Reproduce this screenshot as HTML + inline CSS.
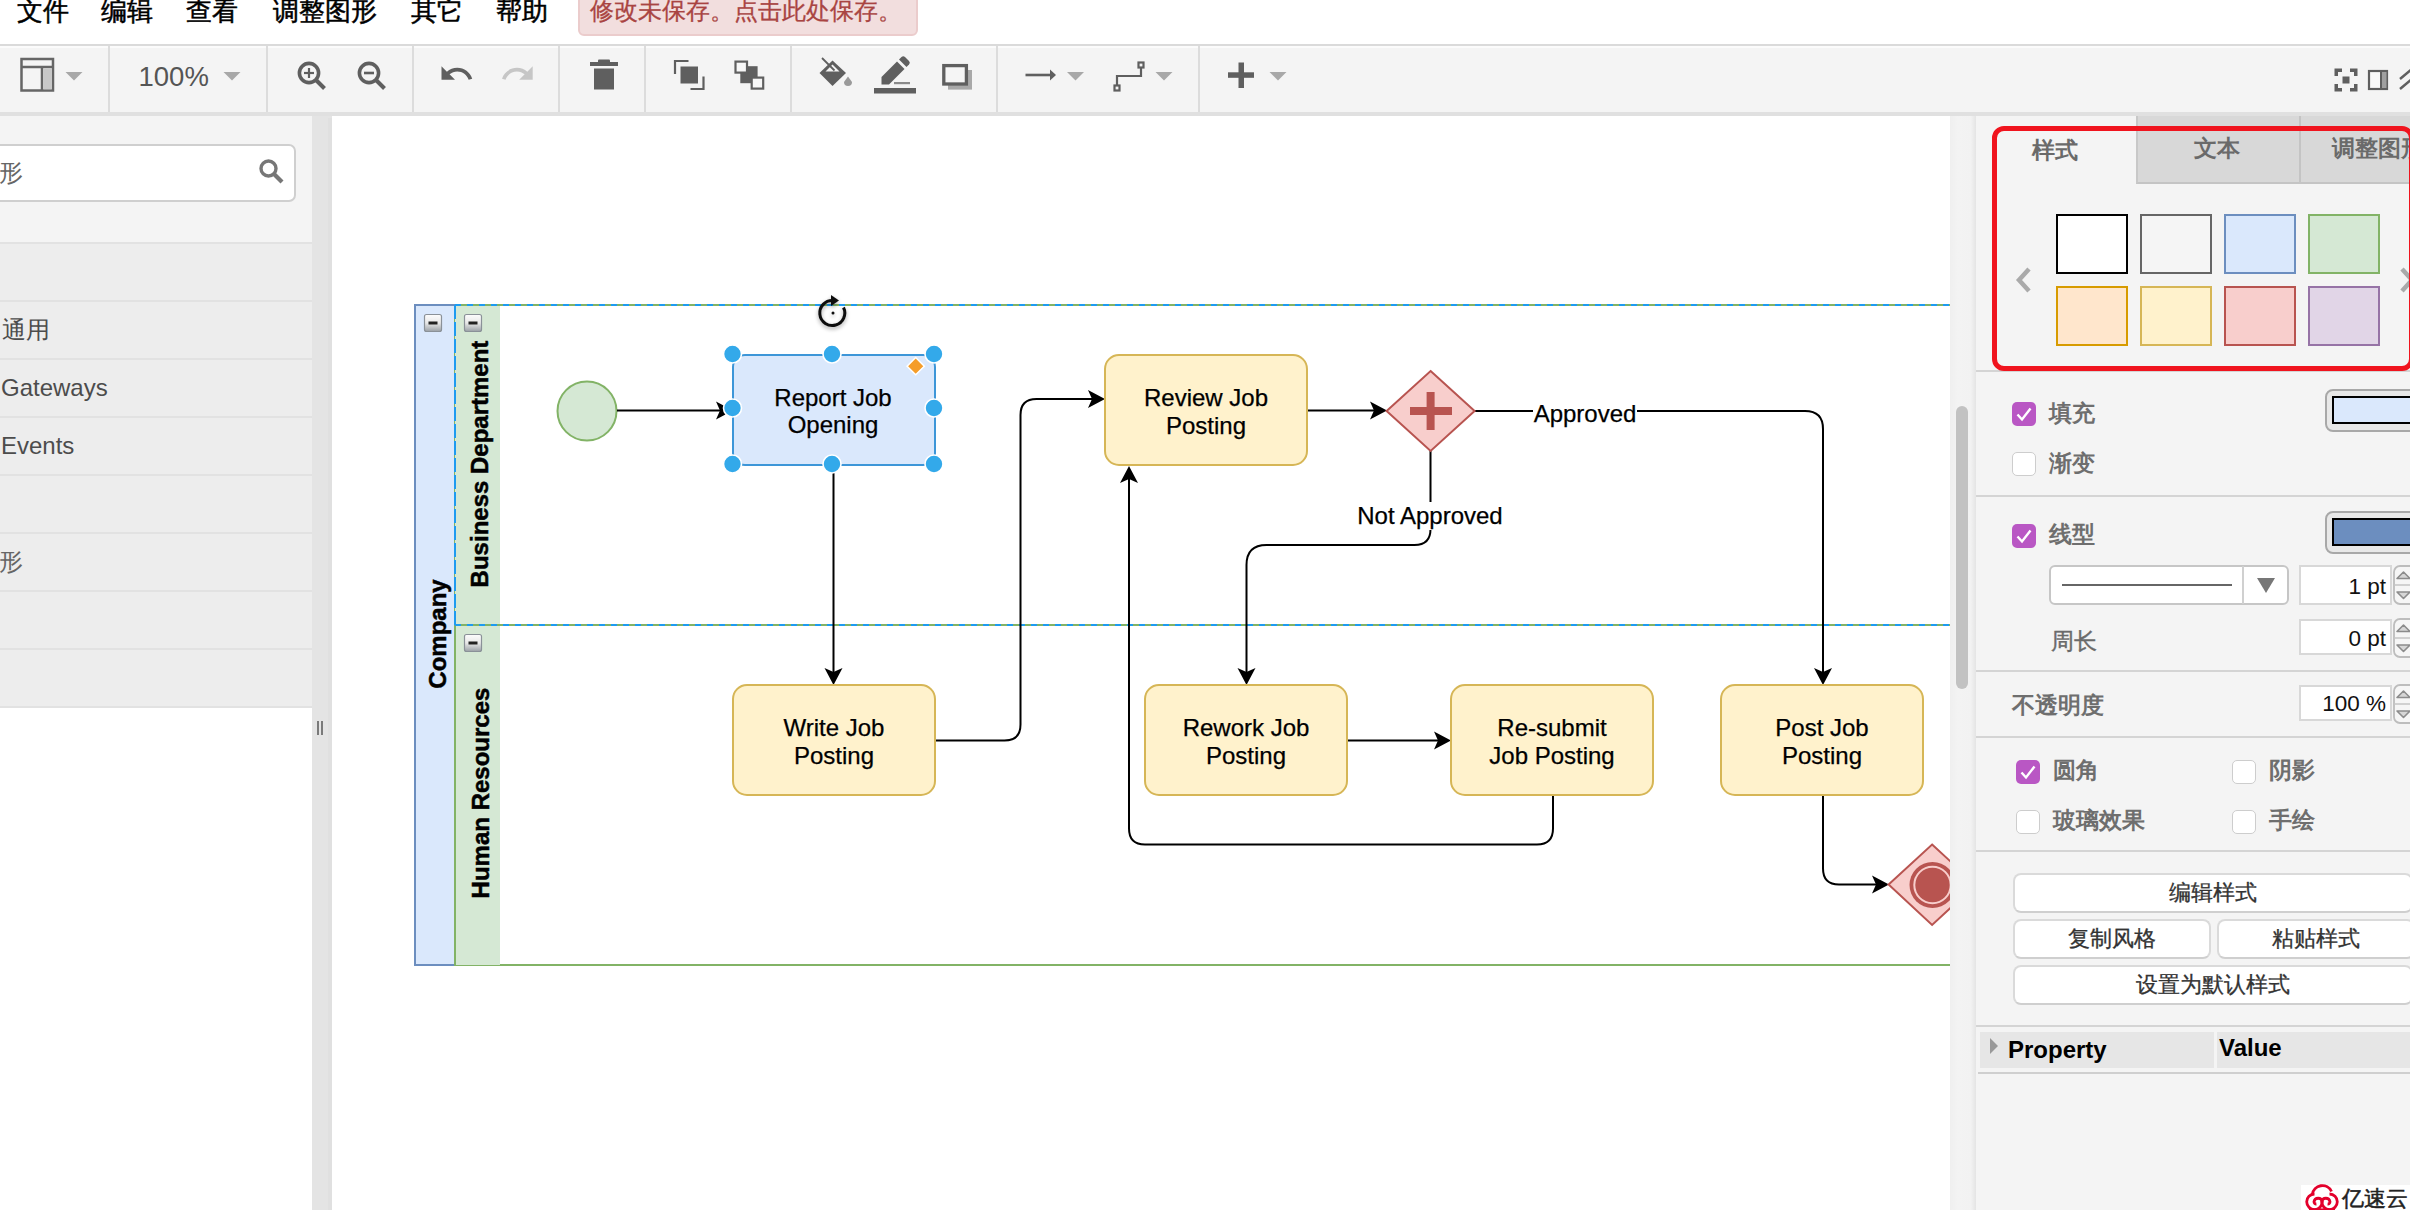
<!DOCTYPE html>
<html><head><meta charset="utf-8">
<style>
*{box-sizing:border-box}
html,body{margin:0;padding:0;width:2410px;height:1210px;overflow:hidden;background:#fff;font-family:"Liberation Sans",sans-serif}
.a{position:absolute}
.menu{top:-6px;font-size:26px;color:#000;line-height:34px;white-space:nowrap;-webkit-text-stroke:0.5px currentColor}
#toolbar{left:0;top:44px;width:2410px;height:72px;background:#f4f4f4;border-top:2px solid #dadada;border-bottom:4px solid #e0e0e0}
.sep{top:0;width:2px;height:66px;background:#dcdcdc}
#sidebar{left:0;top:116px;width:312px;height:1094px;background:#fff}
.row{left:0;width:312px;height:58px;background:#ededed;border-top:2px solid #e2e2e2}
.rowt{font-size:24px;color:#4c4c4c;line-height:28px;white-space:nowrap}
#format{left:1976px;top:116px;width:434px;height:1094px;background:#f4f4f4}
.lbl{font-size:23px;font-weight:bold;color:#6e6e6e;white-space:nowrap;line-height:26px}
.cb{width:24px;height:24px;border-radius:5px}
.cbon{background:#b957c4}
.cboff{background:#fff;border:2px solid #d0d0d0}
.hr{height:2px;background:#d4d4d4}
.btn{background:#fff;border:2px solid #dadada;border-bottom-color:#cfcfcf;border-radius:8px;font-size:22px;color:#333;text-align:center;line-height:36px;white-space:nowrap;-webkit-text-stroke:0.3px #333}
.inp{background:#fff;border:2px solid #d8d8d8;font-size:22.5px;color:#111;text-align:right;padding-right:4px;line-height:32px}
</style></head><body>

<!-- MENU BAR -->
<div class="a menu" style="left:17px">文件</div>
<div class="a menu" style="left:101px">编辑</div>
<div class="a menu" style="left:186px">查看</div>
<div class="a menu" style="left:273px">调整图形</div>
<div class="a menu" style="left:411px">其它</div>
<div class="a menu" style="left:496px">帮助</div>
<div class="a" style="left:578px;top:-6px;width:340px;height:42px;background:#f2dede;border:2px solid #ebcccc;border-radius:6px"></div>
<div class="a menu" style="left:590px;top:-6px;font-size:24px;color:#a94442;-webkit-text-stroke:0.3px currentColor">修改未保存。点击此处保存。</div>

<!-- TOOLBAR -->
<div id="toolbar" class="a"></div>
<div class="a" style="left:0;top:46px;width:2410px;height:2px;background:#fbfbfb"></div>
<div class="a sep" style="left:108px;top:46px"></div>
<div class="a sep" style="left:266px;top:46px"></div>
<div class="a sep" style="left:412px;top:46px"></div>
<div class="a sep" style="left:558px;top:46px"></div>
<div class="a sep" style="left:644px;top:46px"></div>
<div class="a sep" style="left:790px;top:46px"></div>
<div class="a sep" style="left:996px;top:46px"></div>
<div class="a sep" style="left:1198px;top:46px"></div>
<svg class="a" style="left:0;top:44px" width="2410" height="72" viewBox="0 44 2410 72">
 <g fill="none" stroke="#666" stroke-width="2.5">
  <!-- layout icon -->
  <rect x="21.5" y="59" width="31.5" height="31.5"/>
  <line x1="21.5" y1="67" x2="53" y2="67"/>
  <line x1="42" y1="67" x2="42" y2="90.5"/>
 </g>
 <rect x="43.3" y="68.3" width="8.5" height="21" fill="#c8c8c8"/>
 <g fill="#a8a8a8">
  <path d="M65.5 72h17l-8.5 8.5z"/>
  <path d="M223.5 72h17l-8.5 8.5z"/>
  <path d="M1067 72h17l-8.5 8.5z"/>
  <path d="M1155.5 72h17l-8.5 8.5z"/>
  <path d="M1269.5 72h17l-8.5 8.5z"/>
 </g>
 <text x="138.5" y="86" font-size="27.5" fill="#555" font-family="Liberation Sans">100%</text>
 <!-- zoom in/out -->
 <g fill="none" stroke="#5f5f5f" stroke-width="3.6">
  <circle cx="309" cy="73" r="9.6"/>
  <line x1="316" y1="80" x2="324.5" y2="88.5" stroke-width="4"/>
  <line x1="304" y1="73" x2="314" y2="73" stroke-width="2.2"/>
  <line x1="309" y1="68" x2="309" y2="78" stroke-width="2.2"/>
  <circle cx="369" cy="73" r="9.6"/>
  <line x1="376" y1="80" x2="384.5" y2="88.5" stroke-width="4"/>
  <line x1="364" y1="73" x2="374" y2="73" stroke-width="2.6"/>
 </g>
 <!-- undo / redo -->
 <path transform="translate(438.5 55.8) scale(1.5)" d="M12.5 8c-2.65 0-5.05.99-6.9 2.6L2 7v9h9l-3.62-3.62c1.39-1.160 3.16-1.88 5.12-1.88 3.54 0 6.55 2.31 7.6 5.5l2.37-.78C21.08 11.03 17.15 8 12.5 8z" fill="#5f5f5f"/>
 <path transform="translate(499.7 55.8) scale(1.5)" d="M18.4 10.6C16.550 8.99 14.15 8 11.5 8c-4.65 0-8.58 3.03-9.96 7.22L3.9 16c1.05-3.19 4.05-5.5 7.6-5.5 1.95 0 3.73.72 5.12 1.88L13 16h9V7l-3.6 3.6z" fill="#c6c6c6"/>
 <!-- trash -->
 <g fill="#5f5f5f">
  <rect x="590" y="62" width="28" height="4"/>
  <rect x="598" y="59.5" width="12" height="4" rx="1"/>
  <rect x="594" y="68.5" width="20" height="21"/>
 </g>
 <!-- to front -->
 <g fill="none" stroke="#5f5f5f" stroke-width="2.2">
  <path d="M675 74v-13h13.5"/>
  <path d="M703.5 76.5v12.5h-13"/>
 </g>
 <rect x="680.5" y="66.5" width="17.5" height="17" fill="#5f5f5f"/>
 <rect x="740.3" y="66.2" width="17.3" height="17" fill="#5f5f5f"/>
 <rect x="735.5" y="61.6" width="11.5" height="11" fill="#f7f7f7" stroke="#5f5f5f" stroke-width="2.2"/>
 <rect x="751.7" y="77.6" width="11.5" height="11" fill="#f7f7f7" stroke="#5f5f5f" stroke-width="2.2"/>
 <!-- fill color -->
 <path d="M832.5 60.5L846 73L832.5 86L819.5 73Z" fill="#5f5f5f"/>
 <path d="M825.5 71.5H839.5L832.5 64.5Z" fill="#f4f4f4"/>
 <path d="M822 58l12.5 12.5" stroke="#5f5f5f" stroke-width="1.8"/>
 <path d="M848 76.5l4 5.5a4 4 0 1 1-8 0z" fill="#9a9a9a"/>
 <!-- line color -->
 <path d="M881.5 77l15.5-15.5 7.5 7.5-15.5 15.5h-7.5z" fill="#5f5f5f"/>
 <path d="M899 59.5l2.5-2.5a2.5 2.5 0 0 1 3.5 0l4 4a2.5 2.5 0 0 1 0 3.5l-2.5 2.5z" fill="#5f5f5f"/>
 <rect x="894" y="82" width="16" height="2.2" fill="#8a8a8a"/>
 <rect x="874" y="88" width="42" height="5.5" fill="#5f5f5f"/>
 <!-- shadow -->
 <rect x="948" y="70" width="24" height="19.6" fill="#a8a8a8"/>
 <rect x="943.8" y="65.6" width="22.6" height="18.4" fill="#f5f5f5" stroke="#5f5f5f" stroke-width="3.3"/>
 <!-- connection arrow -->
 <line x1="1025.5" y1="75" x2="1050" y2="75" stroke="#5f5f5f" stroke-width="2.6"/>
 <path d="M1050 69.5l6 5.5-6 5.5z" fill="#5f5f5f"/>
 <!-- waypoints -->
 <path d="M1117 88v-12h24v-11" fill="none" stroke="#5f5f5f" stroke-width="2.2"/>
 <rect x="1114.5" y="85.5" width="5" height="5" fill="#f4f4f4" stroke="#5f5f5f" stroke-width="2.2"/>
 <rect x="1138.5" y="62.5" width="5" height="5" fill="#f4f4f4" stroke="#5f5f5f" stroke-width="2.2"/>
 <!-- plus -->
 <rect x="1238.5" y="62.5" width="5.5" height="25.5" fill="#5f5f5f"/>
 <rect x="1228" y="72.3" width="26" height="5.5" fill="#5f5f5f"/>
 <!-- fullscreen -->
 <g fill="#5f5f5f">
  <path d="M2334.5 68.5h7.5v3.5h-4v4h-3.5z"/>
  <path d="M2357.5 68.5h-7.5v3.5h4v4h3.5z"/>
  <path d="M2334.5 91.5h7.5v-3.5h-4v-4h-3.5z"/>
  <path d="M2357.5 91.5h-7.5v-3.5h4v-4h3.5z"/>
  <rect x="2342.5" y="76.5" width="7" height="7"/>
 </g>
 <rect x="2369" y="71" width="18" height="18" fill="#fafafa" stroke="#5f5f5f" stroke-width="2.2"/>
 <rect x="2381.5" y="72" width="5" height="16" fill="#a0a0a0"/>
 <line x1="2381" y1="71" x2="2381" y2="89" stroke="#5f5f5f" stroke-width="2"/>
 <path d="M2400 79l12-10M2400 89l12-10" stroke="#5f5f5f" stroke-width="2.5" fill="none"/>
</svg>

<!-- SIDEBAR -->
<div id="sidebar" class="a"></div>
<div class="a" style="left:0;top:116px;width:312px;height:126px;background:#f4f4f4"></div>
<div class="a" style="left:-20px;top:144px;width:316px;height:58px;background:#fff;border:2px solid #cfcfcf;border-radius:7px"></div>
<div class="a rowt" style="left:-25.5px;top:159px;font-size:24px;color:#666">图形</div>
<svg class="a" style="left:256px;top:156px" width="32" height="32" viewBox="0 0 32 32">
 <circle cx="12.5" cy="12.5" r="7.5" fill="none" stroke="#777" stroke-width="3.4"/>
 <line x1="18" y1="18" x2="26" y2="26" stroke="#777" stroke-width="4.2"/>
</svg>
<div class="a row" style="top:242px"></div>
<div class="a row" style="top:300px"></div>
<div class="a row" style="top:358px"></div>
<div class="a row" style="top:416px"></div>
<div class="a row" style="top:474px"></div>
<div class="a row" style="top:532px"></div>
<div class="a row" style="top:590px"></div>
<div class="a row" style="top:648px"></div>
<div class="a" style="left:0;top:706px;width:312px;height:2px;background:#e2e2e2"></div>
<div class="a rowt" style="left:2px;top:316px">通用</div>
<div class="a rowt" style="left:1px;top:374px">Gateways</div>
<div class="a rowt" style="left:1px;top:432px">Events</div>
<div class="a rowt" style="left:-25.5px;top:548px;color:#666">图形</div>

<!-- SPLITTER -->
<div class="a" style="left:312px;top:116px;width:20px;height:1094px;background:#e4e4e4"></div>
<div class="a" style="left:328px;top:118px;width:4px;height:1092px;background:#e0e0e0"></div>
<div class="a" style="left:317px;top:721px;width:2px;height:14px;background:#7a7a7a"></div>
<div class="a" style="left:321px;top:721px;width:2px;height:14px;background:#7a7a7a"></div>

<!-- CANVAS -->
<div class="a" style="left:332px;top:118px;width:1618px;height:1092px;background:#fff"></div>
<svg class="a" style="left:332px;top:118px" width="1618" height="1092" viewBox="332 118 1618 1092">
<defs>
<linearGradient id="cg" x1="0" y1="0" x2="0" y2="1"><stop offset="0" stop-color="#fdfdfd"/><stop offset="0.5" stop-color="#e8e8e8"/><stop offset="1" stop-color="#9aa0a6"/></linearGradient>
<filter id="sh" x="-50%" y="-50%" width="200%" height="200%"><feGaussianBlur in="SourceAlpha" stdDeviation="2"/><feOffset dx="0" dy="2"/><feComponentTransfer><feFuncA type="linear" slope="0.35"/></feComponentTransfer><feMerge><feMergeNode/><feMergeNode in="SourceGraphic"/></feMerge></filter>
</defs>
<style>.tl{font-family:"Liberation Sans",sans-serif;font-size:24px;fill:#000;stroke:#000;stroke-width:0.25px}.bl{font-family:"Liberation Sans",sans-serif;font-size:24px;font-weight:bold;fill:#000;stroke:#000;stroke-width:0.5px}</style>
<rect x="415" y="305" width="1600" height="660" fill="#fff" stroke="#6c8ebf" stroke-width="2"/>
<rect x="415" y="305" width="40" height="660" fill="#dae8fc" stroke="#6c8ebf" stroke-width="2"/>
<rect x="455" y="305" width="1600" height="320" fill="#fff" stroke="#82b366" stroke-width="2"/>
<rect x="455" y="305" width="45" height="320" fill="#d5e8d4"/>
<rect x="455" y="625" width="1600" height="340" fill="#fff" stroke="#82b366" stroke-width="2"/>
<rect x="455" y="625" width="45" height="340" fill="#d5e8d4"/>
<path d="M455 965V625H2055M455 305H2055" fill="none" stroke="#82b366" stroke-width="2"/>
<path d="M415 305H455" stroke="#6c8ebf" stroke-width="2"/>
<path d="M455 305H2055M455 625H2055" fill="none" stroke="#1e9bf0" stroke-width="2" stroke-dasharray="6 6"/><path d="M455 625V305" fill="none" stroke="#1e9bf0" stroke-width="2" stroke-dasharray="14 3"/>
<text transform="translate(445.5 634) rotate(-90)" text-anchor="middle" class="bl">Company</text>
<text transform="translate(488.3 464) rotate(-90)" text-anchor="middle" class="bl">Business Department</text>
<text transform="translate(488.8 793) rotate(-90)" text-anchor="middle" class="bl">Human Resources</text>
<rect x="424.5" y="314.5" width="17" height="17" rx="2" fill="url(#cg)" stroke="#8a9198" stroke-width="1.2"/><rect x="428.5" y="321.5" width="9" height="3" fill="#222"/>
<rect x="464.5" y="314.5" width="17" height="17" rx="2" fill="url(#cg)" stroke="#8a9198" stroke-width="1.2"/><rect x="468.5" y="321.5" width="9" height="3" fill="#222"/>
<rect x="464.5" y="634.5" width="17" height="17" rx="2" fill="url(#cg)" stroke="#8a9198" stroke-width="1.2"/><rect x="468.5" y="641.5" width="9" height="3" fill="#222"/>
<circle cx="587" cy="411" r="29.5" fill="#d5e8d4" stroke="#82b366" stroke-width="2"/>
<path d="M617 410.5H725" fill="none" stroke="#000" stroke-width="2"/>
<path d="M733.0 410.5 L716.0 401.5 L720.0 410.5 L716.0 419.5Z" fill="#000"/>
<path d="M833.5 465V677" fill="none" stroke="#000" stroke-width="2"/>
<path d="M833.5 685.0 L824.5 668.0 L833.5 672.0 L842.5 668.0Z" fill="#000"/>
<path d="M935 740.5H1004.5Q1020.5 740.5 1020.5 724.5V415Q1020.5 399 1036.5 399H1097" fill="none" stroke="#000" stroke-width="2"/>
<path d="M1105.0 399.0 L1088.0 390.0 L1092.0 399.0 L1088.0 408.0Z" fill="#000"/>
<path d="M1307 410.5H1379" fill="none" stroke="#000" stroke-width="2"/>
<path d="M1387.0 410.5 L1370.0 401.5 L1374.0 410.5 L1370.0 419.5Z" fill="#000"/>
<path d="M1474.5 411H1805Q1823 411 1823 429V677" fill="none" stroke="#000" stroke-width="2"/>
<path d="M1823.0 685.0 L1814.0 668.0 L1823.0 672.0 L1832.0 668.0Z" fill="#000"/>
<path d="M1430.5 451V529Q1430.5 545 1414.5 545H1266.5Q1246.5 545 1246.5 565V677" fill="none" stroke="#000" stroke-width="2"/>
<path d="M1246.5 685.0 L1237.5 668.0 L1246.5 672.0 L1255.5 668.0Z" fill="#000"/>
<path d="M1347 740.5H1443" fill="none" stroke="#000" stroke-width="2"/>
<path d="M1451.0 740.5 L1434.0 731.5 L1438.0 740.5 L1434.0 749.5Z" fill="#000"/>
<path d="M1553 795V828.5Q1553 844.5 1537 844.5H1145Q1129 844.5 1129 828.5V474" fill="none" stroke="#000" stroke-width="2"/>
<path d="M1129.0 466.0 L1120.0 483.0 L1129.0 479.0 L1138.0 483.0Z" fill="#000"/>
<path d="M1823 795V868.5Q1823 884.5 1839 884.5H1881" fill="none" stroke="#000" stroke-width="2"/>
<path d="M1889.0 884.5 L1872.0 875.5 L1876.0 884.5 L1872.0 893.5Z" fill="#000"/>
<rect x="1533" y="398" width="104" height="30" fill="#fff"/><text x="1585" y="422.3" text-anchor="middle" class="tl">Approved</text>
<rect x="1356" y="502" width="148" height="28" fill="#fff"/><text x="1430" y="524.2" text-anchor="middle" class="tl">Not Approved</text>
<rect x="1105.0" y="355.0" width="202" height="110" rx="14" fill="#fff2cc" stroke="#d6b656" stroke-width="2"/><text x="1206.0" y="406.0" text-anchor="middle" class="tl">Review Job</text><text x="1206.0" y="433.5" text-anchor="middle" class="tl">Posting</text>
<rect x="733.0" y="685.0" width="202" height="110" rx="14" fill="#fff2cc" stroke="#d6b656" stroke-width="2"/><text x="834.0" y="736.0" text-anchor="middle" class="tl">Write Job</text><text x="834.0" y="763.5" text-anchor="middle" class="tl">Posting</text>
<rect x="1145.0" y="685.0" width="202" height="110" rx="14" fill="#fff2cc" stroke="#d6b656" stroke-width="2"/><text x="1246.0" y="736.0" text-anchor="middle" class="tl">Rework Job</text><text x="1246.0" y="763.5" text-anchor="middle" class="tl">Posting</text>
<rect x="1451.0" y="685.0" width="202" height="110" rx="14" fill="#fff2cc" stroke="#d6b656" stroke-width="2"/><text x="1552.0" y="736.0" text-anchor="middle" class="tl">Re-submit</text><text x="1552.0" y="763.5" text-anchor="middle" class="tl">Job Posting</text>
<rect x="1721.0" y="685.0" width="202" height="110" rx="14" fill="#fff2cc" stroke="#d6b656" stroke-width="2"/><text x="1822.0" y="736.0" text-anchor="middle" class="tl">Post Job</text><text x="1822.0" y="763.5" text-anchor="middle" class="tl">Posting</text>
<rect x="733" y="355" width="202" height="110" rx="12" fill="#dae8fc" stroke="#3d96d8" stroke-width="2"/>
<text x="833" y="406.2" text-anchor="middle" class="tl">Report Job</text><text x="833" y="433.2" text-anchor="middle" class="tl">Opening</text>
<path d="M1430.6 371L1474.6 411L1430.6 451L1386.6 411Z" fill="#f8cecc" stroke="#b85450" stroke-width="2"/>
<rect x="1410" y="407" width="42" height="8" fill="#b85450"/><rect x="1426.6" y="392" width="8" height="38" fill="#b85450"/>
<path d="M1932.1 844.5L1975.6 884.6L1932.1 925L1888.6 884.6Z" fill="#f8cecc" stroke="#b85450" stroke-width="2"/>
<circle cx="1932.5" cy="885" r="23" fill="#b85450"/><circle cx="1932.5" cy="885" r="18.2" fill="#b85450" stroke="#f8cecc" stroke-width="2"/>
<circle cx="732.5" cy="354.0" r="9" fill="#33a9ea" stroke="#fff" stroke-width="1.6"/>
<circle cx="832.0" cy="354.0" r="9" fill="#33a9ea" stroke="#fff" stroke-width="1.6"/>
<circle cx="934.0" cy="354.0" r="9" fill="#33a9ea" stroke="#fff" stroke-width="1.6"/>
<circle cx="732.5" cy="408.0" r="9" fill="#33a9ea" stroke="#fff" stroke-width="1.6"/>
<circle cx="934.0" cy="408.0" r="9" fill="#33a9ea" stroke="#fff" stroke-width="1.6"/>
<circle cx="732.5" cy="464.0" r="9" fill="#33a9ea" stroke="#fff" stroke-width="1.6"/>
<circle cx="832.0" cy="464.0" r="9" fill="#33a9ea" stroke="#fff" stroke-width="1.6"/>
<circle cx="934.0" cy="464.0" r="9" fill="#33a9ea" stroke="#fff" stroke-width="1.6"/>
<path d="M915.7 357.5L924.3 366.2L915.7 374.8L907.1 366.2Z" fill="#f59d2a" stroke="#fff" stroke-width="1.5"/>
<g filter="url(#sh)"><path d="M843.5 307.5A12.5 12.5 0 1 1 833 300.5" fill="none" stroke="#111" stroke-width="3"/><path d="M831 295L839 300.5L831 306Z" fill="#111"/><circle cx="833" cy="313" r="1.5" fill="#111"/></g>
</svg>

<!-- SCROLLBAR -->
<div class="a" style="left:1950px;top:116px;width:26px;height:1094px;background:linear-gradient(to right,#efefef,#f3f3f3 30%,#f2f2f2 80%,#e4e4e4)"></div>
<div class="a" style="left:1956px;top:406px;width:12px;height:283px;background:#c2c2c2;border-radius:6px"></div>

<!-- FORMAT PANEL -->
<div id="format" class="a"></div>
<!-- tabs -->
<div class="a" style="left:2136px;top:116px;width:163px;height:68px;background:#d8d8d8;border-left:2px solid #c8c8c8;border-bottom:2px solid #c4c4c4"></div>
<div class="a" style="left:2299px;top:116px;width:120px;height:68px;background:#d8d8d8;border-left:2px solid #c4c4c4;border-bottom:2px solid #c4c4c4"></div>
<div class="a lbl" style="left:2032px;top:137px;font-size:23px;color:#6a6a6a">样式</div>
<div class="a lbl" style="left:2194px;top:135px;font-size:23px;color:#6a6a6a">文本</div>
<div class="a lbl" style="left:2332px;top:135px;font-size:23px;color:#6a6a6a">调整图形</div>
<!-- swatches -->
<div class="a" style="left:2056px;top:214px;width:72px;height:60px;background:#fff;border:2.5px solid #000"></div>
<div class="a" style="left:2140px;top:214px;width:72px;height:60px;background:#f5f5f5;border:2.5px solid #666"></div>
<div class="a" style="left:2224px;top:214px;width:72px;height:60px;background:#dae8fc;border:2.5px solid #6c8ebf"></div>
<div class="a" style="left:2308px;top:214px;width:72px;height:60px;background:#d5e8d4;border:2.5px solid #82b366"></div>
<div class="a" style="left:2056px;top:286px;width:72px;height:60px;background:#ffe6cc;border:2.5px solid #d79b00"></div>
<div class="a" style="left:2140px;top:286px;width:72px;height:60px;background:#fff2cc;border:2.5px solid #d6b656"></div>
<div class="a" style="left:2224px;top:286px;width:72px;height:60px;background:#f8cecc;border:2.5px solid #b85450"></div>
<div class="a" style="left:2308px;top:286px;width:72px;height:60px;background:#e1d5e7;border:2.5px solid #9673a6"></div>
<svg class="a" style="left:2010px;top:264px" width="30" height="32" viewBox="0 0 30 32"><path d="M19 5L9 16L19 27" fill="none" stroke="#aaa" stroke-width="4.5"/></svg>
<svg class="a" style="left:2396px;top:264px" width="20" height="32" viewBox="0 0 20 32"><path d="M6 5L16 16L6 27" fill="none" stroke="#aaa" stroke-width="4.5"/></svg>
<div class="a hr" style="left:1976px;top:370px;width:434px"></div>
<!-- red highlight -->
<div class="a" style="left:1992px;top:126px;width:422px;height:245px;border:5px solid #f0141e;border-radius:12px"></div>
<!-- fill -->
<svg class="a" style="left:2012px;top:402px" width="24" height="24" viewBox="0 0 24 24"><rect x="0" y="0" width="24" height="24" rx="5" fill="#b957c4"/><path d="M5.5 12.5l4.5 5 8.5-11" fill="none" stroke="#fff" stroke-width="2.4"/></svg>
<div class="a lbl" style="left:2049px;top:400px">填充</div>
<div class="a" style="left:2012px;top:452px;width:24px;height:24px;border-radius:5px;background:#fff;border:1.5px solid #cdcdcd"></div>
<div class="a lbl" style="left:2049px;top:450px">渐变</div>
<div class="a" style="left:2325px;top:389px;width:100px;height:43px;background:#e8e8e8;border:2px solid #a8a8a8;border-radius:8px"></div>
<div class="a" style="left:2332px;top:396px;width:90px;height:28px;background:#dae8fc;border:2.5px solid #000"></div>
<div class="a hr" style="left:1976px;top:495px;width:434px"></div>
<!-- line -->
<svg class="a" style="left:2012px;top:524px" width="24" height="24" viewBox="0 0 24 24"><rect x="0" y="0" width="24" height="24" rx="5" fill="#b957c4"/><path d="M5.5 12.5l4.5 5 8.5-11" fill="none" stroke="#fff" stroke-width="2.4"/></svg>
<div class="a lbl" style="left:2049px;top:521px">线型</div>
<div class="a" style="left:2325px;top:511px;width:100px;height:43px;background:#e8e8e8;border:2px solid #a8a8a8;border-radius:8px"></div>
<div class="a" style="left:2332px;top:518px;width:90px;height:28px;background:#6c8ebf;border:2.5px solid #000"></div>
<div class="a" style="left:2049px;top:565px;width:240px;height:40px;background:#fff;border:2px solid #c6c6c6;border-radius:6px"></div>
<div class="a" style="left:2242px;top:566px;width:2px;height:38px;background:#d0d0d0"></div>
<div class="a" style="left:2062px;top:584px;width:170px;height:2px;background:#666"></div>
<svg class="a" style="left:2255px;top:576px" width="22" height="20" viewBox="0 0 22 20"><path d="M2 2H20L11 17Z" fill="#777"/></svg>
<div class="a inp" style="left:2299px;top:565px;width:93px;height:40px;line-height:40px">1 pt</div>
<svg class="a" style="left:2393px;top:565px" width="20" height="40" viewBox="0 0 20 40"><rect x="1" y="1" width="26" height="38" rx="6" fill="#f6f6f6" stroke="#bdbdbd" stroke-width="1.8"/><path d="M4 13.5L10.5 7L17 13.5Z" fill="#d6d6d6" stroke="#8c8c8c" stroke-width="1.6" stroke-linejoin="round"/><line x1="1" y1="20" x2="20" y2="20" stroke="#c4c4c4" stroke-width="1.5"/><path d="M4 27L10.5 33.5L17 27Z" fill="#d6d6d6" stroke="#8c8c8c" stroke-width="1.6" stroke-linejoin="round"/></svg>
<div class="a lbl" style="left:2051px;top:628px;font-weight:normal;color:#6a6a6a;-webkit-text-stroke:0.4px #6a6a6a">周长</div>
<div class="a inp" style="left:2299px;top:619px;width:93px;height:36px;line-height:35px">0 pt</div>
<svg class="a" style="left:2393px;top:618px" width="20" height="40" viewBox="0 0 20 40"><rect x="1" y="1" width="26" height="38" rx="6" fill="#f6f6f6" stroke="#bdbdbd" stroke-width="1.8"/><path d="M4 13.5L10.5 7L17 13.5Z" fill="#d6d6d6" stroke="#8c8c8c" stroke-width="1.6" stroke-linejoin="round"/><line x1="1" y1="20" x2="20" y2="20" stroke="#c4c4c4" stroke-width="1.5"/><path d="M4 27L10.5 33.5L17 27Z" fill="#d6d6d6" stroke="#8c8c8c" stroke-width="1.6" stroke-linejoin="round"/></svg>
<div class="a hr" style="left:1976px;top:670px;width:434px"></div>
<div class="a lbl" style="left:2012px;top:692px">不透明度</div>
<div class="a inp" style="left:2299px;top:685px;width:93px;height:36px;line-height:34px">100 %</div>
<svg class="a" style="left:2393px;top:684px" width="20" height="40" viewBox="0 0 20 40"><rect x="1" y="1" width="26" height="38" rx="6" fill="#f6f6f6" stroke="#bdbdbd" stroke-width="1.8"/><path d="M4 13.5L10.5 7L17 13.5Z" fill="#d6d6d6" stroke="#8c8c8c" stroke-width="1.6" stroke-linejoin="round"/><line x1="1" y1="20" x2="20" y2="20" stroke="#c4c4c4" stroke-width="1.5"/><path d="M4 27L10.5 33.5L17 27Z" fill="#d6d6d6" stroke="#8c8c8c" stroke-width="1.6" stroke-linejoin="round"/></svg>
<div class="a hr" style="left:1976px;top:736px;width:434px"></div>
<svg class="a" style="left:2016px;top:760px" width="24" height="24" viewBox="0 0 24 24"><rect x="0" y="0" width="24" height="24" rx="5" fill="#b957c4"/><path d="M5.5 12.5l4.5 5 8.5-11" fill="none" stroke="#fff" stroke-width="2.4"/></svg>
<div class="a lbl" style="left:2053px;top:757px">圆角</div>
<div class="a" style="left:2232px;top:760px;width:24px;height:24px;border-radius:5px;background:#fff;border:1.5px solid #cdcdcd"></div>
<div class="a lbl" style="left:2269px;top:757px">阴影</div>
<div class="a" style="left:2016px;top:810px;width:24px;height:24px;border-radius:5px;background:#fff;border:1.5px solid #cdcdcd"></div>
<div class="a lbl" style="left:2053px;top:807px">玻璃效果</div>
<div class="a" style="left:2232px;top:810px;width:24px;height:24px;border-radius:5px;background:#fff;border:1.5px solid #cdcdcd"></div>
<div class="a lbl" style="left:2269px;top:807px">手绘</div>
<div class="a hr" style="left:1976px;top:850px;width:434px"></div>
<div class="a btn" style="left:2013px;top:873px;width:400px;height:40px">编辑样式</div>
<div class="a btn" style="left:2013px;top:919px;width:198px;height:40px">复制风格</div>
<div class="a btn" style="left:2217px;top:919px;width:198px;height:40px">粘贴样式</div>
<div class="a btn" style="left:2013px;top:965px;width:400px;height:40px">设置为默认样式</div>
<div class="a hr" style="left:1976px;top:1025px;width:434px"></div>
<div class="a" style="left:1980px;top:1032px;width:234px;height:36px;background:#e6e6e6"></div>
<div class="a" style="left:2217px;top:1032px;width:200px;height:36px;background:#e6e6e6"></div>
<svg class="a" style="left:1988px;top:1037px" width="12" height="18" viewBox="0 0 12 18"><path d="M2 1L10 9L2 17Z" fill="#999"/></svg>
<div class="a" style="left:2008px;top:1036px;font-size:24px;font-weight:bold;color:#000;line-height:28px">Property</div>
<div class="a" style="left:2219px;top:1034px;font-size:24px;font-weight:bold;color:#000;line-height:28px">Value</div>
<div class="a" style="left:1978px;top:1072px;width:432px;height:2px;background:#cfcfcf"></div>
<!-- watermark -->
<div class="a" style="left:2301px;top:1185px;width:109px;height:25px;background:#fff"></div>
<svg class="a" style="left:2290px;top:1170px" width="60" height="40" viewBox="0 0 60 40">
 <g fill="none" stroke="#e3002b" stroke-width="2.8">
 <path d="M22.3 24.5A10.1 10.1 0 0 1 41.5 21.5"/>
 <path d="M24.5 24A7.8 7.8 0 1 0 32.3 31.8A4.2 4.2 0 0 0 24 31.8A2.2 2.2 0 0 0 26.4 34"/>
 <path d="M39.5 24A7.8 7.8 0 1 1 31.7 31.8A4.2 4.2 0 0 1 40 31.8A2.2 2.2 0 0 1 37.6 34"/>
 </g>
 <rect x="19" y="38.4" width="26" height="2" fill="#e3002b"/>
</svg>
<div class="a" style="left:2342px;top:1185px;font-size:21.5px;color:#222;line-height:28px;white-space:nowrap;-webkit-text-stroke:0.5px #222">亿速云</div>

</body></html>
